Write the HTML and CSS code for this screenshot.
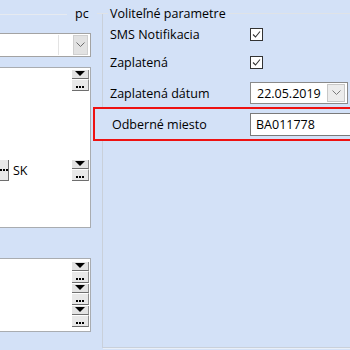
FILE: index.html
```html
<!DOCTYPE html>
<html>
<head>
<meta charset="utf-8">
<link rel="stylesheet" href="styles.css">
</head>
<body>
<div class="screen">
  <div class="left">
    <div class="lhead"><span class="hline"></span><span class="pc">pc</span></div>
    <div class="combo">
      <div class="cfield"></div>
      <div class="cfield2"></div>
      <div class="cbtn"><svg width="9" height="6" viewBox="0 0 9 6"><path d="M0.5 0.5 L4.5 4.5 L8.5 0.5" fill="none" stroke="#6d6d6d" stroke-width="1"/></svg></div>
    </div>
    <div class="box box1">
      <div class="pair first">
        <div class="tri"><span class="arrow"></span></div>
        <div class="dots"><span></span><span></span><span></span></div>
      </div>
      <div class="skrow">
        <div class="lbtn"><span></span><span></span><span></span></div>
        <span class="sk">SK</span>
        <span class="grow"></span>
        <div class="pair">
          <div class="tri"><span class="arrow"></span></div>
          <div class="dots"><span></span><span></span><span></span></div>
        </div>
      </div>
    </div>
    <div class="box box2">
      <div class="pair">
        <div class="tri"><span class="arrow"></span></div>
        <div class="dots"><span></span><span></span><span></span></div>
      </div>
      <div class="pair">
        <div class="tri"><span class="arrow"></span></div>
        <div class="dots"><span></span><span></span><span></span></div>
      </div>
      <div class="pair">
        <div class="tri"><span class="arrow"></span></div>
        <div class="dots"><span></span><span></span><span></span></div>
      </div>
    </div>
  </div>
  <div class="right">
    <div class="ghead"><span class="gl1"></span><span class="gtitle">Voliteľné parametre</span><span class="gl2"></span></div>
    <div class="gbody">
      <div class="row r1"><span class="label">SMS Notifikacia</span><span class="check"><svg width="11" height="11" viewBox="0 0 11 11"><path d="M2 5.5 L4.5 8 L9 2.5" fill="none" stroke="#333" stroke-width="1.1"/></svg></span></div>
      <div class="row r2"><span class="label">Zaplatená</span><span class="check"><svg width="11" height="11" viewBox="0 0 11 11"><path d="M2 5.5 L4.5 8 L9 2.5" fill="none" stroke="#333" stroke-width="1.1"/></svg></span></div>
      <div class="row r3"><span class="label">Zaplatená dátum</span>
        <div class="date"><span class="dtext">22.05.2019</span><span class="dbtn"><svg width="9" height="6" viewBox="0 0 9 6"><path d="M0.5 0.5 L4.5 4.5 L8.5 0.5" fill="none" stroke="#7a7a7a" stroke-width="1"/></svg></span></div>
      </div>
      <div class="redbox">
        <span class="label rlabel">Odberné miesto</span>
        <div class="input">BA011778</div>
      </div>
    </div>
  </div>
</div>
</body>
</html>
```
FILE: styles.css
```css
html, body {
  margin: 0;
  padding: 0;
  width: 350px;
  height: 350px;
  overflow: hidden;
  background: #d3e1f7;
  font-family: "Open Sans", "Liberation Sans", sans-serif;
  font-size: 12.5px;
  color: #000;
}
.screen {
  display: flex;
  height: 350px;
}
.left {
  width: 93px;
  margin-left: -2px;
  flex-shrink: 0;
  display: flex;
  flex-direction: column;
}
.lhead {
  height: 28px;
  display: flex;
  align-items: center;
}
.hline {
  width: 69px;
  height: 1px;
  background: #e6eaf0;
}
.pc {
  margin-left: 8px;
  line-height: 14px;
}
.combo {
  margin-top: 5px;
  height: 24px;
  box-sizing: border-box;
  border: 1px solid #a3a3a3;
  background: #fff;
  display: flex;
  padding: 1px;
}
.cfield {
  width: 58px;
  border-right: 1px solid #e3e3e3;
}
.cfield2 {
  flex: 1;
}
.cbtn {
  width: 15px;
  margin-right: 1px;
  background: #e2e2e2;
  border: 1px solid #cfcfcf;
  box-sizing: border-box;
  display: flex;
  align-items: center;
  justify-content: center;
}
.box {
  background: #fff;
  border: 1px solid #a9acb0;
  box-sizing: border-box;
  display: flex;
  flex-direction: column;
}
.box1 {
  margin-top: 10px;
  height: 161px;
}
.box2 {
  margin-top: 30px;
  height: 74px;
  padding-top: 3px;
  align-items: flex-end;
  gap: 1px;
}
.pair {
  width: 17px;
  display: flex;
  flex-direction: column;
  margin-right: 1px;
}
.pair.first {
  align-self: flex-end;
  margin-top: 2px;
}
.tri {
  height: 9px;
  box-sizing: border-box;
  background: #e3e3e3;
  border-bottom: 1px solid #6e6e6e;
  border-right: 1px solid #8e8e8e;
  display: flex;
  justify-content: center;
  padding-top: 1px;
}
.arrow {
  width: 0;
  height: 0;
  border-left: 5px solid transparent;
  border-right: 5px solid transparent;
  border-top: 5px solid #000;
}
.dots {
  height: 12px;
  box-sizing: border-box;
  background: #e8e8e8;
  border-top: 1px solid #fff;
  border-bottom: 1px solid #6e6e6e;
  border-right: 1px solid #8e8e8e;
  display: flex;
  justify-content: center;
  align-items: flex-end;
  gap: 1px;
  padding-bottom: 2px;
}
.dots span, .lbtn span {
  width: 2px;
  height: 2px;
  background: #000;
}
.skrow {
  margin-top: 69px;
  display: flex;
  height: 21px;
}
.lbtn {
  width: 10px;
  height: 21px;
  box-sizing: border-box;
  background: #e8e8e8;
  border-right: 1px solid #6e6e6e;
  border-bottom: 1px solid #6e6e6e;
  display: flex;
  align-items: center;
  justify-content: center;
  gap: 1px;
}
.sk {
  margin-left: 4px;
  line-height: 21px;
}
.grow {
  flex: 1;
}
.right {
  flex: 1;
  padding-left: 6px;
  display: flex;
  flex-direction: column;
  min-width: 0;
}
.ghead {
  height: 27px;
  display: flex;
  align-items: center;
  position: relative;
  z-index: 1;
}
.gl1 {
  width: 11px;
  height: 1px;
  background: #dfe3e8;
}
.gtitle {
  padding: 0 2px;
  white-space: nowrap;
}
.gl2 {
  flex: 1;
  height: 1px;
  background: #dfe3e8;
}
.gbody {
  margin-top: -13px;
  margin-left: 5px;
  height: 334px;
  box-sizing: border-box;
  border-left: 1px solid #c9d0da;
  border-bottom: 1px solid #c9d0da;
  box-shadow: 1px 1px 0 #e9eff8;
  padding-top: 6px;
  padding-left: 7px;
  display: flex;
  flex-direction: column;
}
.row {
  display: flex;
  align-items: center;
}
.r1, .r2 {
  height: 28px;
}
.r3 {
  margin-top: 6px;
  height: 22px;
}
.label {
  width: 140px;
  flex-shrink: 0;
  white-space: nowrap;
}
.check {
  width: 13px;
  height: 13px;
  box-sizing: border-box;
  border: 1px solid #333;
  background: #fff;
  display: flex;
}
.date {
  width: 98px;
  height: 22px;
  box-sizing: border-box;
  border: 1px solid #8a8a8a;
  background: #fff;
  display: flex;
  align-items: center;
  padding-left: 6px;
  padding-right: 2px;
}
.dtext {
  flex: 1;
}
.dbtn {
  width: 18px;
  height: 18px;
  box-sizing: border-box;
  border: 1px solid #c8c8c8;
  background: #ececec;
  display: flex;
  align-items: center;
  justify-content: center;
}
.redbox {
  margin-top: 3px;
  margin-left: -17px;
  width: 257px;
  height: 34px;
  box-sizing: border-box;
  border: 2px solid #ee1111;
  border-right: 0;
  background: #d3e1f7;
  display: flex;
  align-items: center;
  padding-left: 17px;
}
.rlabel {
  width: 138px;
}
.input {
  flex: 1;
  height: 23px;
  box-sizing: border-box;
  border: 1px solid #7a7a7a;
  border-right: 0;
  background: #fff;
  padding-left: 5px;
  line-height: 21px;
}
```
